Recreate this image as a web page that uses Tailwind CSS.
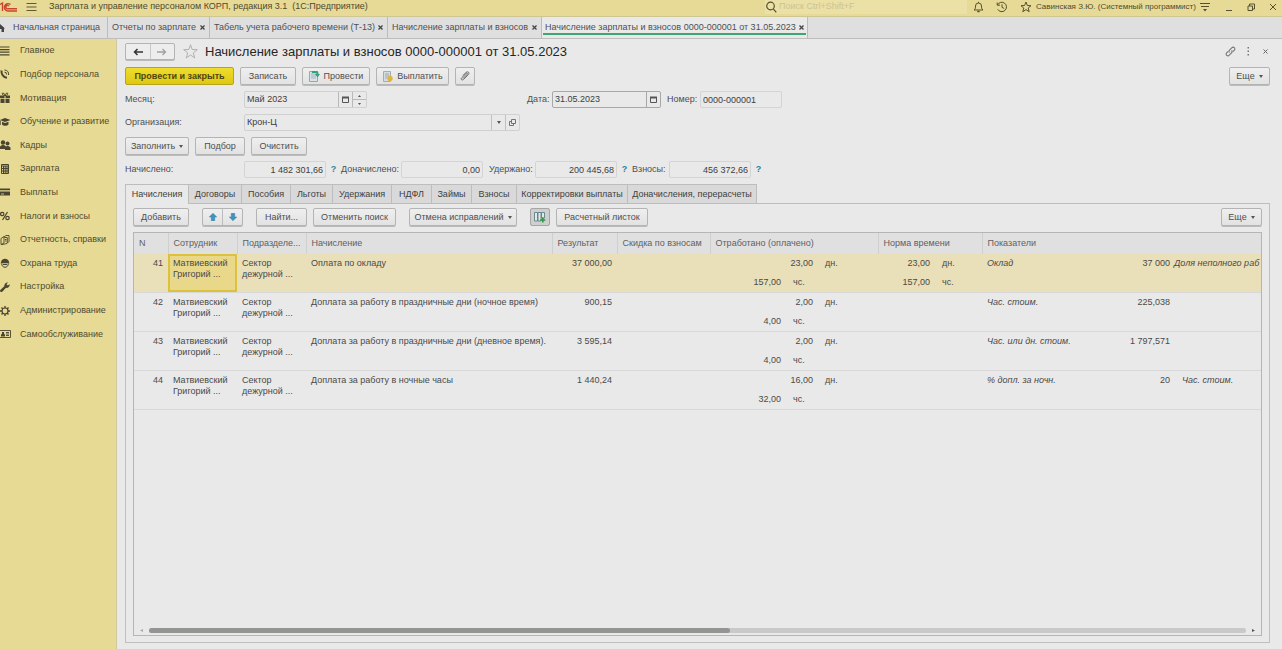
<!DOCTYPE html>
<html lang="ru">
<head>
<meta charset="utf-8">
<title>Начисление зарплаты и взносов</title>
<script src="https://cdn.jsdelivr.net/npm/@tailwindcss/browser@4"></script>
</head>
<body class="h-screen flex flex-col overflow-hidden bg-[#e9e9e9] font-['Liberation_Sans',sans-serif] text-[9px] leading-[11px] text-[#4f4f4f]">

<!-- Title bar -->
<header class="h-[17px] shrink-0 flex items-center bg-[#e6da96] border-b border-[#cfc791] text-[#4f4a30] pb-[3px]">
  <svg class="w-[18px] h-3 shrink-0" viewBox="0 0 18 12" fill="none" stroke="#c8452e" stroke-width="1.4"><path d="M0 3.500 2.500 2V10M10.500 3.500A3.700 3.700 0 1 0 8 10H17M9 5.200A1.700 1.700 0 1 0 8 7.800H17"/></svg>
  <button aria-label="Меню" class="ml-2 shrink-0"><svg class="w-[11px] h-3" viewBox="0 0 11 12" stroke="#5f5936" stroke-width="1.200"><path d="M.500 2.500H10.500M.500 6H10.500M.500 9.500H10.500"/></svg></button>
  <h1 class="ml-3 whitespace-pre">Зарплата и управление персоналом КОРП, редакция 3.1  (1С:Предприятие)</h1>
  <label class="ml-auto w-[202px] h-[14px] flex items-center bg-[#ebe0a6] gap-0.5">
    <svg class="w-3 h-3 shrink-0" viewBox="0 0 12 12" fill="none" stroke="#55502f" stroke-width="1.200"><circle cx="5.500" cy="5" r="3.800"/><path d="M8.300 7.800 11.300 11.300"/></svg>
    <input type="search" aria-label="Поиск" placeholder="Поиск Ctrl+Shift+F" class="min-w-0 flex-1 bg-transparent placeholder:text-[#cdc391]">
  </label>
  <div class="flex items-center gap-3 ml-1.5 shrink-0">
    <button aria-label="Уведомления"><svg class="w-[11px] h-3" viewBox="0 0 11 12" fill="none" stroke="#55502f"><path d="M1 9C2.500 8 2.500 6.500 2.500 5A3 3 0 0 1 8.500 5C8.500 6.500 8.500 8 10 9ZM5.500 2V.800"/><path d="M4.300 10.500H6.700" stroke-width="1.500"/></svg></button>
    <button aria-label="История"><svg class="w-3 h-3" viewBox="0 0 12 12" fill="none" stroke="#55502f"><path d="M1.500 4A4.700 4.700 0 1 1 1.700 8.300M1.200 1.500V4.200H4M6 3.300V6.300L8.200 7.500"/></svg></button>
    <button aria-label="Избранное"><svg class="w-3 h-3" viewBox="0 0 12 12" fill="none" stroke="#55502f"><path d="M6 1 7.400 4.500 11 4.700 8.200 7 9.200 10.700 6 8.600 2.800 10.700 3.800 7 1 4.700 4.600 4.500Z"/></svg></button>
  </div>
  <span class="ml-1 w-[161px] shrink-0 whitespace-nowrap text-[8px]">Савинская З.Ю. (Системный программист)</span>
  <div class="flex items-center ml-0.5 mr-1 shrink-0 gap-3">
    <button aria-label="Настройка"><svg class="w-3 h-3" viewBox="0 0 12 12" fill="none" stroke="#55502f"><path d="M1 2.500H11M2 5.500H10"/><path d="M4 8H8L6 10.500Z" fill="#55502f" stroke="none"/></svg></button>
    <button aria-label="Свернуть"><svg class="w-[11px] h-3" viewBox="0 0 11 12" stroke="#55502f"><path d="M3 9.500H9"/></svg></button>
    <button aria-label="Развернуть"><svg class="w-[10px] h-3" viewBox="0 0 10 12" fill="none" stroke="#55502f"><path d="M2 5H6.500V9.500H2ZM3.500 5V3H8.500V8H6.500"/></svg></button>
    <button aria-label="Закрыть"><svg class="w-[10px] h-3" viewBox="0 0 10 12" stroke="#55502f"><path d="M2 3 8 9M8 3 2 9"/></svg></button>
  </div>
</header>

<!-- Open windows -->
<nav class="h-[22px] shrink-0 flex bg-[#dfdfe0] border-b border-[#bdbdbd] whitespace-nowrap" aria-label="Открытые окна">
  <a href="#" class="w-[108px] shrink-0 flex items-center gap-2 border-r border-[#bcbcbc]"><svg class="w-[5px] h-2" viewBox="0 0 5 8" fill="#444"><path d="M0 0 5 4.500H4V8H1.500V5H0Z"/></svg>Начальная страница</a>
  <div class="w-[102px] shrink-0 flex items-center justify-between px-1 border-r border-[#bcbcbc]"><a href="#">Отчеты по зарплате</a><button aria-label="Закрыть"><svg class="w-[5px] h-[5px]" viewBox="0 0 5 5" stroke="#444" stroke-width="1.300"><path d="M.500.500 4.500 4.500M4.500.500.500 4.500"/></svg></button></div>
  <div class="w-[178px] shrink-0 flex items-center justify-between px-1 border-r border-[#bcbcbc]"><a href="#">Табель учета рабочего времени (Т-13)</a><button aria-label="Закрыть"><svg class="w-[5px] h-[5px]" viewBox="0 0 5 5" stroke="#444" stroke-width="1.300"><path d="M.500.500 4.500 4.500M4.500.500.500 4.500"/></svg></button></div>
  <div class="w-[154px] shrink-0 flex items-center justify-between px-1 border-r border-[#bcbcbc]"><a href="#">Начисление зарплаты и взносов</a><button aria-label="Закрыть"><svg class="w-[5px] h-[5px]" viewBox="0 0 5 5" stroke="#444" stroke-width="1.300"><path d="M.500.500 4.500 4.500M4.500.500.500 4.500"/></svg></button></div>
  <div class="w-[266px] shrink-0 px-px border-r border-[#bcbcbc] bg-[#e9e9ea] pb-[3px] flex"><div class="flex-1 flex items-center justify-between px-0.5 pt-[5px] border-b-2 border-[#3fa574]"><a href="#" aria-current="page">Начисление зарплаты и взносов 0000-000001 от 31.05.2023</a><button aria-label="Закрыть"><svg class="w-[5px] h-[5px]" viewBox="0 0 5 5" stroke="#444" stroke-width="1.300"><path d="M.500.500 4.500 4.500M4.500.500.500 4.500"/></svg></button></div></div>
</nav>

<div class="flex-1 min-h-0 flex">
  <!-- Sections -->
  <aside class="w-[117px] shrink-0 bg-[#e6da94] border-r border-[#cfc99f] text-[#514b2e]">
    <ul class="h-[307px] grid auto-rows-fr whitespace-nowrap">
      <li><a href="#" class="h-full flex items-center gap-[9px]"><svg class="w-[11px] h-3" viewBox="0 0 11 12" stroke="#4a4530" stroke-width="1.200"><path d="M0 2H9.500M0 4.600H9.500M0 7.200H9.500M0 9.800H9.500"/></svg>Главное</a></li>
      <li><a href="#" class="h-full flex items-center gap-[9px]"><svg class="w-[11px] h-3" viewBox="0 0 11 12" fill="none" stroke="#4a4530"><path d="M1.500 2.500C1 6 3.500 9.500 7 9.800" stroke-width="2"/><path d="M4.500 2A4 4 0 0 1 8.500 7M4.500 4.200A2 2 0 0 1 6.500 6.500"/></svg>Подбор персонала</a></li>
      <li><a href="#" class="h-full flex items-center gap-[9px]"><svg class="w-[11px] h-3" viewBox="0 0 11 12" fill="#4a4530"><path d="M0 3.500H4.500V6H0ZM5.500 3.500H10V6H5.500ZM.500 6.700H4.500V11H.500ZM5.500 6.700H9.500V11H5.500Z"/><path d="M5 3.500C2 3.500 1.500 1 3 1S5 3.500 5 3.500 5.500 1 7 1 8 3.500 5 3.500Z" fill="none" stroke="#4a4530"/></svg>Мотивация</a></li>
      <li><a href="#" class="h-full flex items-center gap-[9px]"><svg class="w-[11px] h-3" viewBox="0 0 11 12" fill="#4a4530"><path d="M0 4 5 2 10.500 4 5 6ZM2 5.800 5 7 8.500 5.800V8.500C7 10.200 3.500 10.200 2 8.500ZM.300 4.500H1V9H.300Z"/></svg>Обучение и развитие</a></li>
      <li><a href="#" class="h-full flex items-center gap-[9px]"><svg class="w-[11px] h-3" viewBox="0 0 11 12" fill="#4a4530"><circle cx="3" cy="3.500" r="2.200"/><path d="M0 10V7.500L2 6H4L6 7.500V10Z"/><circle cx="7.500" cy="4.500" r="2"/><path d="M5 11V8.500L6.700 7H8.500L10.500 8.500V11Z"/></svg>Кадры</a></li>
      <li><a href="#" class="h-full flex items-center gap-[9px]"><svg class="w-[11px] h-3" viewBox="0 0 11 12" fill="none" stroke="#4a4530"><path d="M1.500 1.500H8.500V10.500H1.500ZM1.500 3H8.500M3.500 3V10M5.200 3V10M7 3V10M2 5.500H8M2 8H8"/></svg>Зарплата</a></li>
      <li><a href="#" class="h-full flex items-center gap-[9px]"><svg class="w-[11px] h-3" viewBox="0 0 11 12" fill="#4a4530"><path d="M0 2.500H10V4.300H0ZM0 5.500H10V9.500H0Z"/><path d="M1 8H4" stroke="#e6da94" stroke-width=".8"/></svg>Выплаты</a></li>
      <li><a href="#" class="h-full flex items-center gap-[9px]"><svg class="w-[11px] h-3" viewBox="0 0 11 12" fill="none" stroke="#4a4530" stroke-width="1.200"><circle cx="2.200" cy="4" r="1.700"/><circle cx="7.500" cy="8" r="1.700"/><path d="M7.500 2 2.500 10"/></svg>Налоги и взносы</a></li>
      <li><a href="#" class="h-full flex items-center gap-[9px]"><svg class="w-[11px] h-3" viewBox="0 0 11 12" fill="none" stroke="#4a4530" stroke-width=".9"><path d="M1 4.500 4 2.500V9L1 10.500ZM4 3 6 1.500H9V7.500L7 9.500 1.500 10.700M4.500 3.500H7.300V9M5 5.500H6.500M5 7H6.500"/></svg>Отчетность, справки</a></li>
      <li><a href="#" class="h-full flex items-center gap-[9px]"><svg class="w-[11px] h-3" viewBox="0 0 11 12" fill="#4a4530"><path d="M1 5.500C1 .500 9 .500 9 5.500L9.700 6.300H.300Z"/><path d="M1.700 6.500C1.700 11.500 8.300 11.500 8.300 6.500" fill="none" stroke="#4a4530"/><path d="M3 7H7V8H3Z"/></svg>Охрана труда</a></li>
      <li><a href="#" class="h-full flex items-center gap-[9px]"><svg class="w-[11px] h-3" viewBox="0 0 11 12" fill="#4a4530"><path d="M0 9.200 4.300 5.200C4 3 6 1 8 1.500L6.500 3.300 7.800 4.600 9.700 3.200C10 5.500 8 7.300 6 6.800L2 11 .500 11Z"/></svg>Настройка</a></li>
      <li><a href="#" class="h-full flex items-center gap-[9px]"><svg class="w-[11px] h-3" viewBox="0 0 11 12" fill="none" stroke="#4a4530"><circle cx="5" cy="6" r="3" stroke-width="1.200"/><path d="M5 1V3M5 9V11M0 6H2M8 6H10M1.500 2.500 2.900 3.900M7.100 8.100 8.500 9.500M8.500 2.500 7.100 3.900M2.900 8.100 1.500 9.500" stroke-width="1.400"/></svg>Администрирование</a></li>
      <li><a href="#" class="h-full flex items-center gap-[9px]"><svg class="w-[11px] h-3" viewBox="0 0 11 12" fill="none" stroke="#4a4530" stroke-width=".9"><path d="M0 2.500H10.500V9.500H0M6 4.500H9M6 6H9M6 7.500H9"/><path d="M1 8.500V6.500L2 6V4H4V6L5 6.500V8.500Z" fill="#4a4530" stroke="none"/></svg>Самообслуживание</a></li>
    </ul>
  </aside>

  <main class="flex-1 min-w-0 flex flex-col gap-1.5 pt-[3px] pb-1.5 pl-2 pr-3 whitespace-nowrap">
    <!-- Document title -->
    <div class="h-[19px] shrink-0 flex items-center">
      <div class="flex h-[17px] w-[50px] border border-[#b4b4b4] rounded-xs bg-[#ededed] shadow-[0_1px_0_#bbb]">
        <button aria-label="Назад" class="flex-1 flex items-center justify-center border-r border-[#c8c8c8]"><svg class="w-[10px] h-2" viewBox="0 0 10 8" fill="none" stroke="#333" stroke-width="1.500"><path d="M10 4H1.500M4.500 1 1.500 4 4.500 7"/></svg></button>
        <button aria-label="Вперед" class="flex-1 flex items-center justify-center"><svg class="w-[10px] h-2" viewBox="0 0 10 8" fill="none" stroke="#a0a0a0" stroke-width="1.300"><path d="M0 4H8.500M5.500 1 8.500 4 5.500 7"/></svg></button>
      </div>
      <button aria-label="В избранное" class="ml-2"><svg class="w-[15px] h-[15px]" viewBox="0 0 15 15" fill="none" stroke="#a9a9a9" stroke-width=".9"><path d="M7.500 .800 9.200 5.500 14.300 5.700 10.300 8.900 11.700 13.900 7.500 11 3.300 13.900 4.700 8.900 .700 5.700 5.800 5.500Z"/></svg></button>
      <h2 class="ml-[7px] text-[13px] leading-4 text-[#262626]">Начисление зарплаты и взносов 0000-000001 от 31.05.2023</h2>
      <div class="ml-auto flex items-center gap-3">
        <button aria-label="Ссылка"><svg class="w-[11px] h-[11px]" viewBox="0 0 11 11" fill="none" stroke="#777" stroke-width="1.100"><path d="M4.500 6.500C3.500 5.500 4 4.500 4.700 3.800L6.700 1.800C8.500 0 11 2.500 9.200 4.300L8 5.500M6.500 4.500C7.500 5.500 7 6.500 6.300 7.200L4.300 9.200C2.500 11 0 8.500 1.800 6.700L3 5.500"/></svg></button>
        <button aria-label="Действия" class="-ml-0.5"><svg class="w-[5px] h-[9px]" viewBox="0 0 5 9" fill="#777"><path d="M1.500 0H3V1.500H1.500ZM1.500 3.500H3V5H1.500ZM1.500 7H3V8.500H1.500Z"/></svg></button>
        <button aria-label="Закрыть" class="mr-0.5"><svg class="w-[5px] h-[5px]" viewBox="0 0 5 5" stroke="#666"><path d="M.500.500 4.500 4.500M4.500.500.500 4.500"/></svg></button>
      </div>
    </div>

    <!-- Commands -->
    <div class="h-[18px] shrink-0 flex gap-1.5">
      <button class="w-[109px] border border-[#b5a51a] rounded-xs bg-linear-to-b from-[#efdc2c] to-[#dfc810] font-bold text-[#4d4614]">Провести и закрыть</button>
      <button class="w-14 border border-[#b4b4b4] rounded-xs bg-linear-to-b from-[#efefef] to-[#e2e2e2] shadow-[0_1px_0_#bbb]">Записать</button>
      <button class="w-[68px] flex items-center justify-center gap-1 border border-[#b4b4b4] rounded-xs bg-linear-to-b from-[#efefef] to-[#e2e2e2] shadow-[0_1px_0_#bbb]"><svg class="w-[11px] h-3" viewBox="0 0 11 12"><path d="M.500 1.500H8.500V11.500H.500Z" fill="#dce3e6" stroke="#98a5ac"/><path d="M2 4H7M2 6H7M2 8H7" stroke="#9fb0c0"/><path d="M3 1H7.500C9 1 9.500 2 9.500 4H11L8.500 7.500 6 4H7.500C7.500 3 7 3 6 3H3Z" fill="#2fa37a"/></svg>Провести</button>
      <button class="w-[73px] flex items-center justify-center gap-1 border border-[#b4b4b4] rounded-xs bg-linear-to-b from-[#efefef] to-[#e2e2e2] shadow-[0_1px_0_#bbb]"><svg class="w-[11px] h-3" viewBox="0 0 11 12"><path d="M1.500 1.500H8.500V11.500H1.500Z" fill="#d5dde0" stroke="#a5acb0"/><path d="M3 4H7M3 6H7M3 8H5" stroke="#98a9b8"/><circle cx="8" cy="8.500" r="2.700" fill="#dfb63a"/></svg>Выплатить</button>
      <button aria-label="Файлы" class="w-5 flex items-center justify-center border border-[#b4b4b4] rounded-xs bg-linear-to-b from-[#efefef] to-[#e2e2e2] shadow-[0_1px_0_#bbb]"><svg class="w-[10px] h-[10px]" viewBox="0 0 10 10" fill="none" stroke="#666"><path d="M3 7.500 7 3.500C8 2.500 7 1.500 6 2.500L1.800 6.700C.300 8.200 2 9.900 3.500 8.400L8.300 3.600C10 1.900 8 0 6.300 1.200L3 4.500"/></svg></button>
      <button class="ml-auto w-[41px] flex items-center justify-center gap-1 border border-[#b4b4b4] rounded-xs bg-linear-to-b from-[#efefef] to-[#e2e2e2] shadow-[0_1px_0_#bbb]">Еще<svg class="w-1 h-[3px]" viewBox="0 0 4 3" fill="#555"><path d="M0 0H4L2 3Z"/></svg></button>
    </div>

    <!-- Month, date, number -->
    <div class="h-[17px] shrink-0 flex items-center">
      <label for="month" class="w-[119px]">Месяц:</label>
      <div class="h-full flex border border-[#d0d0d0] rounded-xs">
        <input id="month" value="Май 2023" class="w-[93px] px-0.5 text-[#3d3d3d]">
        <button aria-label="Выбрать месяц" class="w-[14px] border-l border-[#b8b8b8] flex items-center justify-center"><svg class="w-[7px] h-[7px]" viewBox="0 0 7 7" fill="none" stroke="#555"><path d="M.500 1.500H6.500V6.500H.500Z"/><path d="M0 1.500H7" stroke-width="2"/></svg></button>
        <div class="w-[14px] flex flex-col border-l border-[#b8b8b8]">
          <button aria-label="Больше" class="flex-1 flex items-center justify-center border-b border-[#b8b8b8]"><svg class="w-[3px] h-0.5" viewBox="0 0 3 2" fill="#555"><path d="M0 2H3L1.500 0Z"/></svg></button>
          <button aria-label="Меньше" class="flex-1 flex items-center justify-center"><svg class="w-[3px] h-0.5" viewBox="0 0 3 2" fill="#555"><path d="M0 0H3L1.500 2Z"/></svg></button>
        </div>
      </div>
      <label for="date" class="ml-40 w-[25px]">Дата:</label>
      <div class="h-full flex border border-[#a8a8a8] rounded-xs">
        <input id="date" value="31.05.2023" class="w-[93px] px-0.5 text-[#3d3d3d]">
        <button aria-label="Выбрать дату" class="w-[14px] border-l border-[#a8a8a8] flex items-center justify-center"><svg class="w-[7px] h-[7px]" viewBox="0 0 7 7" fill="none" stroke="#555"><path d="M.500 1.500H6.500V6.500H.500Z"/><path d="M0 1.500H7" stroke-width="2"/></svg></button>
      </div>
      <label for="num" class="ml-1.5 w-[33px]">Номер:</label>
      <input id="num" value="0000-000001" class="h-full w-[82px] px-0.5 border border-[#d4d4d4] rounded-xs text-[#3d3d3d]">
    </div>

    <!-- Organization -->
    <div class="h-[17px] shrink-0 flex items-center">
      <label for="org" class="w-[119px]">Организация:</label>
      <div class="h-full flex border border-[#d0d0d0] rounded-xs">
        <input id="org" value="Крон-Ц" class="w-[246px] px-0.5 text-[#3d3d3d]">
        <button aria-label="Выбрать" class="w-[14px] border-l border-[#c0c0c0] flex items-center justify-center"><svg class="w-1 h-[3px]" viewBox="0 0 4 3" fill="#555"><path d="M0 0H4L2 3Z"/></svg></button>
        <button aria-label="Открыть" class="w-[14px] border-l border-[#c0c0c0] flex items-center justify-center"><svg class="w-[7px] h-[7px]" viewBox="0 0 7 7" fill="none" stroke="#666" stroke-width=".9"><path d="M2.500 .500H6.500V4.500H2.500ZM2.500 2.500H.500V6.500H4.500V4.500"/></svg></button>
      </div>
    </div>

    <!-- Fill commands -->
    <div class="h-[18px] shrink-0 flex gap-1.5">
      <button class="w-16 flex items-center justify-center gap-1 border border-[#b4b4b4] rounded-xs bg-linear-to-b from-[#efefef] to-[#e2e2e2] shadow-[0_1px_0_#bbb]">Заполнить<svg class="w-1 h-[3px]" viewBox="0 0 4 3" fill="#555"><path d="M0 0H4L2 3Z"/></svg></button>
      <button class="w-[50px] border border-[#b4b4b4] rounded-xs bg-linear-to-b from-[#efefef] to-[#e2e2e2] shadow-[0_1px_0_#bbb]">Подбор</button>
      <button class="w-14 border border-[#b4b4b4] rounded-xs bg-linear-to-b from-[#efefef] to-[#e2e2e2] shadow-[0_1px_0_#bbb]">Очистить</button>
    </div>

    <!-- Totals -->
    <div class="h-[17px] shrink-0 flex items-center">
      <label for="t1" class="w-[119px]">Начислено:</label>
      <input id="t1" readonly value="1 482 301,66" class="h-full w-[82px] px-0.5 text-right border border-[#d4d4d4] rounded-xs text-[#3d3d3d]">
      <button class="w-[15px] font-bold text-[#2b8a94]" aria-label="Подробнее о начисленном">?</button>
      <label for="t2" class="w-[60px]">Доначислено:</label>
      <input id="t2" readonly value="0,00" class="h-full w-[82px] px-0.5 text-right border border-[#d4d4d4] rounded-xs text-[#3d3d3d]">
      <label for="t3" class="ml-1.5 w-[46px]">Удержано:</label>
      <input id="t3" readonly value="200 445,68" class="h-full w-[82px] px-0.5 text-right border border-[#d4d4d4] rounded-xs text-[#3d3d3d]">
      <button class="w-[15px] font-bold text-[#2b7f9e]" aria-label="Подробнее об удержаниях">?</button>
      <label for="t4" class="w-[37px]">Взносы:</label>
      <input id="t4" readonly value="456 372,66" class="h-full w-[82px] px-0.5 text-right border border-[#d4d4d4] rounded-xs text-[#3d3d3d]">
      <button class="w-[15px] font-bold text-[#2b7f9e]" aria-label="Подробнее о взносах">?</button>
    </div>

    <section class="flex-1 min-h-0 flex flex-col">
      <!-- Page tabs -->
      <div role="tablist" class="h-[19px] shrink-0 flex border-l border-[#bdbdbd] text-[#3f3f3f] *:border-r *:border-t *:border-[#bdbdbd]">
        <button role="tab" aria-selected="true" class="w-[63px] bg-[#e9e9e9]">Начисления</button>
        <button role="tab" class="w-[53px] bg-[#d9d9d9]">Договоры</button>
        <button role="tab" class="w-[49px] bg-[#d9d9d9]">Пособия</button>
        <button role="tab" class="w-[42px] bg-[#d9d9d9]">Льготы</button>
        <button role="tab" class="w-[59px] bg-[#d9d9d9]">Удержания</button>
        <button role="tab" class="w-10 bg-[#d9d9d9]">НДФЛ</button>
        <button role="tab" class="w-10 bg-[#d9d9d9]">Займы</button>
        <button role="tab" class="w-[45px] bg-[#d9d9d9]">Взносы</button>
        <button role="tab" class="w-[111px] bg-[#d9d9d9]">Корректировки выплаты</button>
        <button role="tab" class="w-[129px] bg-[#d9d9d9]">Доначисления, перерасчеты</button>
      </div>
      <div class="flex-1 min-h-0 min-w-0 flex flex-col border-x border-b border-[#bfbfbf] pb-1.5">
        <div class="shrink-0 flex h-px"><div class="w-[62px]"></div><div class="flex-1 bg-[#bdbdbd]"></div></div>
        <!-- Table toolbar -->
        <div class="h-[18px] shrink-0 flex mt-1 mb-1.5 px-[7px]">
          <button class="w-14 border border-[#b4b4b4] rounded-xs bg-linear-to-b from-[#efefef] to-[#e2e2e2] shadow-[0_1px_0_#bbb]">Добавить</button>
          <div class="ml-[13px] w-[41px] flex border border-[#b4b4b4] rounded-xs bg-linear-to-b from-[#efefef] to-[#e2e2e2] shadow-[0_1px_0_#bbb]">
            <button aria-label="Вверх" class="flex-1 flex items-center justify-center border-r border-[#bdbdbd]"><svg class="w-2 h-2" viewBox="0 0 8 8" fill="#3f93bd" stroke="#2f7ca5" stroke-width=".5"><path d="M4 .300 7.700 4H5.700V7.700H2.300V4H.300Z"/></svg></button>
            <button aria-label="Вниз" class="flex-1 flex items-center justify-center"><svg class="w-2 h-2" viewBox="0 0 8 8" fill="#3f93bd" stroke="#2f7ca5" stroke-width=".5"><path d="M4 7.700 7.700 4H5.700V.300H2.300V4H.300Z"/></svg></button>
          </div>
          <button class="ml-[13px] w-[51px] border border-[#b4b4b4] rounded-xs bg-linear-to-b from-[#efefef] to-[#e2e2e2] shadow-[0_1px_0_#bbb]">Найти...</button>
          <button class="ml-1.5 w-[83px] border border-[#b4b4b4] rounded-xs bg-linear-to-b from-[#efefef] to-[#e2e2e2] shadow-[0_1px_0_#bbb]">Отменить поиск</button>
          <button class="ml-[13px] w-[108px] flex items-center justify-center gap-1 border border-[#b4b4b4] rounded-xs bg-linear-to-b from-[#efefef] to-[#e2e2e2] shadow-[0_1px_0_#bbb]">Отмена исправлений<svg class="w-1 h-[3px]" viewBox="0 0 4 3" fill="#555"><path d="M0 0H4L2 3Z"/></svg></button>
          <button aria-label="Показатели" aria-pressed="true" class="ml-[13px] w-5 flex items-center justify-center border border-[#a5a5a5] rounded-xs bg-[#cfcfcf]"><svg class="w-3 h-[11px]" viewBox="0 0 12 11" fill="#dfe8ea" stroke="#5f8087" stroke-width=".9"><path d="M.500 .500H3.500V9H.500ZM4 .500H7V9H4ZM7.500 .500H10.500V6H7.500Z"/><path d="M8.800 5.500V10.500M6.300 8H11.300" stroke="#2f9a3c" stroke-width="1.600"/></svg></button>
          <button class="ml-1.5 w-[92px] border border-[#b4b4b4] rounded-xs bg-linear-to-b from-[#efefef] to-[#e2e2e2] shadow-[0_1px_0_#bbb]">Расчетный листок</button>
          <button class="ml-auto w-[41px] flex items-center justify-center gap-1 border border-[#b4b4b4] rounded-xs bg-linear-to-b from-[#efefef] to-[#e2e2e2] shadow-[0_1px_0_#bbb]">Еще<svg class="w-1 h-[3px]" viewBox="0 0 4 3" fill="#555"><path d="M0 0H4L2 3Z"/></svg></button>
        </div>
        <!-- Accruals table -->
        <div class="flex-1 min-h-0 mx-[7px] flex flex-col overflow-hidden border border-[#b5b5b5]">
          <table class="table-fixed w-full border-collapse text-[#4a4a4a]">
            <colgroup><col class="w-[34px]"><col class="w-[69px]"><col class="w-[69px]"><col class="w-[246px]"><col class="w-[65px]"><col class="w-[93px]"><col class="w-[168px]"><col class="w-[104px]"><col></colgroup>
            <thead>
              <tr class="h-[21px] bg-[#e0e0e1] text-left text-[#5f5f5f] *:font-normal *:px-[5px] *:border-r *:border-[#cfcfcf]">
                <th>N</th><th>Сотрудник</th><th>Подразделе...</th><th>Начисление</th><th>Результат</th><th>Скидка по взносам</th><th>Отработано (оплачено)</th><th>Норма времени</th><th class="border-r-0!">Показатели</th>
              </tr>
            </thead>
            <tbody class="align-top *:border-b *:border-[#d8d8d8] [&_td]:px-[5px] [&_td]:pt-1">
              <tr class="h-[38px] bg-[#e9dfb8]">
                <td class="text-right">41</td>
                <td class="bg-[#ead88a] outline-2 -outline-offset-2 outline-[#dcc23c]">Матвиевский<br>Григорий ...</td>
                <td>Сектор<br>дежурной ...</td>
                <td>Оплата по окладу</td>
                <td class="text-right">37 000,00</td><td></td>
                <td><div class="w-[110px] flex"><span class="flex-1 text-right">23,00</span><span class="w-0 pl-3">дн.</span></div><div class="mt-2 w-[78px] flex"><span class="flex-1 text-right">157,00</span><span class="w-0 pl-3">чс.</span></div></td>
                <td><div class="w-[59px] flex"><span class="flex-1 text-right">23,00</span><span class="w-0 pl-3">дн.</span></div><div class="mt-2 w-[59px] flex"><span class="flex-1 text-right">157,00</span><span class="w-0 pl-3">чс.</span></div></td>
                <td class="pr-0!"><div class="flex gap-1"><i>Оклад</i><span class="flex-1 text-right">37 000</span><i class="w-[87px] shrink-0">Доля неполного раб</i></div></td>
              </tr>
              <tr class="h-[39px]">
                <td class="text-right">42</td>
                <td>Матвиевский<br>Григорий ...</td>
                <td>Сектор<br>дежурной ...</td>
                <td>Доплата за работу в праздничные дни (ночное время)</td>
                <td class="text-right">900,15</td><td></td>
                <td><div class="w-[110px] flex"><span class="flex-1 text-right">2,00</span><span class="w-0 pl-3">дн.</span></div><div class="mt-2 w-[78px] flex"><span class="flex-1 text-right">4,00</span><span class="w-0 pl-3">чс.</span></div></td>
                <td></td>
                <td class="pr-0!"><div class="flex gap-3"><i>Час. стоим.</i><span class="flex-1 text-right">225,038</span><i class="w-[79px] shrink-0"></i></div></td>
              </tr>
              <tr class="h-[39px]">
                <td class="text-right">43</td>
                <td>Матвиевский<br>Григорий ...</td>
                <td>Сектор<br>дежурной ...</td>
                <td>Доплата за работу в праздничные дни (дневное время).</td>
                <td class="text-right">3 595,14</td><td></td>
                <td><div class="w-[110px] flex"><span class="flex-1 text-right">2,00</span><span class="w-0 pl-3">дн.</span></div><div class="mt-2 w-[78px] flex"><span class="flex-1 text-right">4,00</span><span class="w-0 pl-3">чс.</span></div></td>
                <td></td>
                <td class="pr-0!"><div class="flex gap-3"><i>Час. или дн. стоим.</i><span class="flex-1 text-right">1 797,571</span><i class="w-[79px] shrink-0"></i></div></td>
              </tr>
              <tr class="h-[39px]">
                <td class="text-right">44</td>
                <td>Матвиевский<br>Григорий ...</td>
                <td>Сектор<br>дежурной ...</td>
                <td>Доплата за работу в ночные часы</td>
                <td class="text-right">1 440,24</td><td></td>
                <td><div class="w-[110px] flex"><span class="flex-1 text-right">16,00</span><span class="w-0 pl-3">дн.</span></div><div class="mt-2 w-[78px] flex"><span class="flex-1 text-right">32,00</span><span class="w-0 pl-3">чс.</span></div></td>
                <td></td>
                <td class="pr-0!"><div class="flex gap-3"><i>% допл. за ночн.</i><span class="flex-1 text-right">20</span><i class="w-[79px] shrink-0">Час. стоим.</i></div></td>
              </tr>
            </tbody>
          </table>
          <div class="mt-auto mb-0.5 h-[5px] flex items-center gap-1.5 px-1.5">
            <svg class="w-[3px] h-[3px]" viewBox="0 0 3 3" fill="#aaa"><path d="M3 0V3L0 1.500Z"/></svg>
            <div class="flex-1 h-[5px] rounded-full bg-[#c9c9c9]"><div class="w-[53%] h-full rounded-full bg-[#939593]"></div></div>
            <svg class="w-[3px] h-[3px]" viewBox="0 0 3 3" fill="#555"><path d="M0 0V3L3 1.500Z"/></svg>
          </div>
        </div>
      </div>
    </section>
  </main>
</div>
</body>
</html>
